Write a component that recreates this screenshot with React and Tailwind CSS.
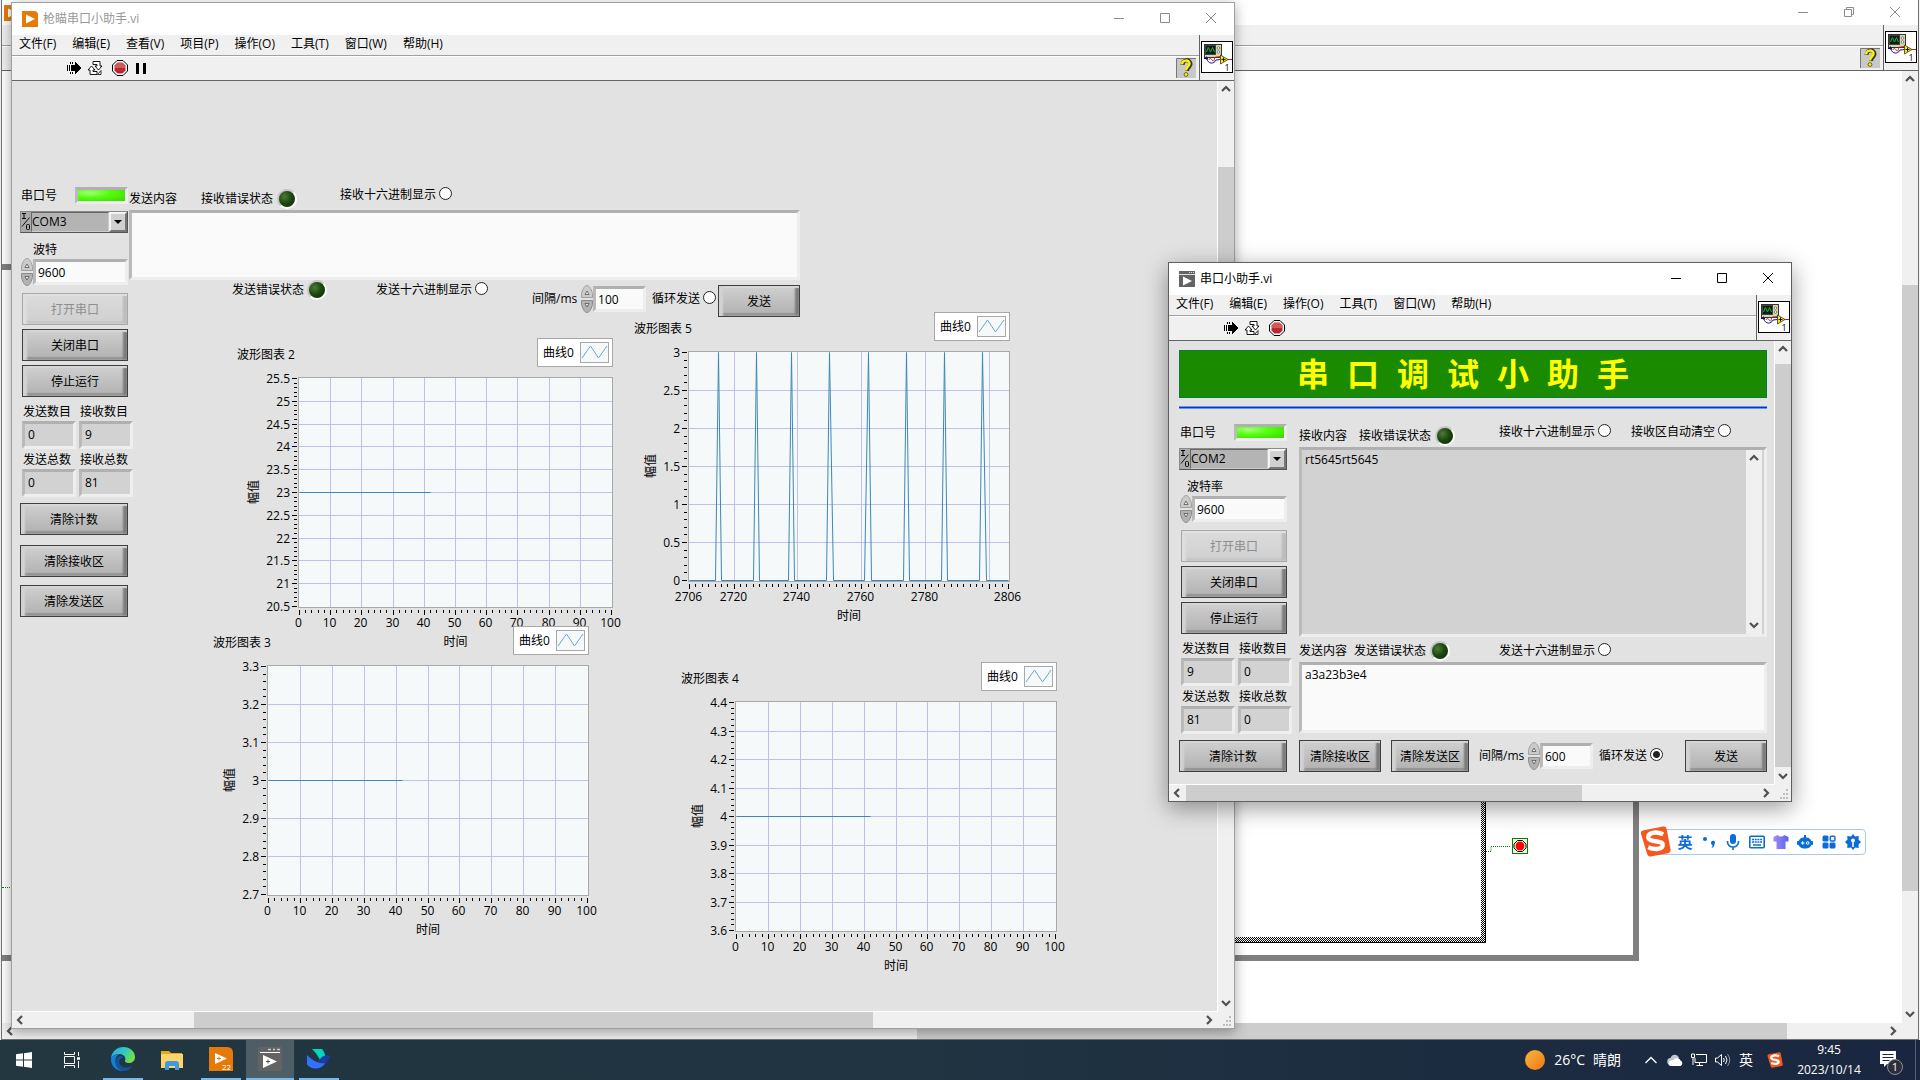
import { useState } from "react";

const mainMenu = ["文件(F)", "编辑(E)", "查看(V)", "项目(P)", "操作(O)", "工具(T)", "窗口(W)", "帮助(H)"];
const subMenu = ["文件(F)", "编辑(E)", "操作(O)", "工具(T)", "窗口(W)", "帮助(H)"];

const range = (from, to, step) => {
  const out = [];
  const n = Math.round((to - from) / step);
  for (let i = 0; i <= n; i++) out.push(Math.round((from + i * step) * 100) / 100);
  return out;
};

const tens = range(0, 100, 10);
const spikes = [2715, 2727, 2738, 2750, 2762, 2774, 2786, 2798];
const spikeData = [
  [2706, 0],
  ...spikes.flatMap((s) => [[s - 1, 0], [s, 3], [s + 1, 0]]),
  [2806, 0],
];

const charts = {
  c2: { title: "波形图表 2", left: 61, x: [0, 100], xTicks: tens, y: [20.5, 25.5], yStep: 0.5, data: [[0, 23], [42, 23]] },
  c3: { title: "波形图表 3", left: 54, x: [0, 100], xTicks: tens, y: [2.7, 3.3], yStep: 0.1, data: [[0, 3], [42, 3]] },
  c4: { title: "波形图表 4", left: 54, x: [0, 100], xTicks: tens, y: [3.6, 4.4], yStep: 0.1, data: [[0, 4], [42, 4]] },
  c5: {
    title: "波形图表 5",
    left: 54,
    x: [2706, 2806],
    xTicks: [2706, 2720, 2740, 2760, 2780, 2800, 2806],
    hidden: [2800],
    y: [0, 3],
    yStep: 0.5,
    data: spikeData,
  },
};

/* ---------- icons ---------- */

const ViIcon = () => (
  <svg viewBox="0 0 32 32" className="h-8 w-8">
    <rect x="0.5" y="0.5" width="31" height="31" fill="#fff" stroke="#000" />
    <rect x="3.5" y="3.5" width="17" height="13" fill="#d9d6b4" stroke="#333" />
    <rect x="4.500" y="4.500" width="10" height="9" fill="#101c14" stroke="#444" />
    <path d="M5.500 11l1.800-4.500L9.500 11l2-4.500L13.500 11" fill="none" stroke="#12b83c" />
    <circle cx="17.500" cy="7" r="1.300" fill="#fff" stroke="#555" strokeWidth=".7" />
    <circle cx="17.500" cy="11" r="1.300" fill="#fff" stroke="#555" strokeWidth=".7" />
    <path d="M5.500 15.500v3M3 17.500h4" stroke="#001080" />
    <path d="M6 18c1 5 7 5.500 9 1l4.500-.5" fill="none" stroke="#0a1a90" />
    <path d="M8 19c1-3 2.500-1 3.500.5s2-.5 2-2 1.500-1.500 5.500-2" fill="none" stroke="#e01010" />
    <path d="M26 18.500h5" stroke="#e01010" />
    <path d="M19.500 14v9l7.500-4.500z" fill="#ffea00" stroke="#333" strokeWidth=".8" />
    <path d="M20.500 18.500h4M22.500 16.500v4" stroke="#000" strokeWidth=".9" />
    <text x="23.500" y="30" fontSize="9" fill="#000">1</text>
  </svg>
);

const RunIcon = () => (
  <svg viewBox="0 0 16 14" className="h-[14px] w-4" shapeRendering="crispEdges">
    <path d="M1.500 4v6M3.500 4v6M4.500 1v2M4.500 11v2M6.500 1v2M6.500 11v2" stroke="#000" />
    <path d="M5 4h4V1l6 6-6 6v-3H5z" fill="#000" />
  </svg>
);

const LoopIcon = () => (
  <svg viewBox="0 0 16 14" className="h-[14px] w-4">
    <path d="M6 .5h7v4.500h2L11.500 9 8 5h2V3.500H6z" fill="#fff" stroke="#000" strokeWidth=".9" />
    <path d="M10 13.500H3V9H1l3.500-4L8 9H6v1.500h4z" fill="#fff" stroke="#000" strokeWidth=".9" />
    <path d="M10.500 13.500L14 9.500v4z" fill="#fff" stroke="#000" strokeWidth=".8" />
  </svg>
);

const StopIcon = () => (
  <svg viewBox="0 0 16 16" className="h-4 w-4">
    <path d="M5 .5h6L15.500 5v6L11 15.500H5L.5 11V5z" fill="#fff" stroke="#000" />
    <path d="M5.500 2.500h5l3 3v5l-3 3h-5l-3-3v-5z" fill="#b8282c" />
    <path d="M5.500 3h5l2.500 2.500V8H3V5.500z" fill="#cf5a5c" />
  </svg>
);

const HelpIcon = () => (
  <svg viewBox="0 0 20 20" className="h-5 w-5">
    <path d="M0 0h20v20H0z" fill="#c8c8c8" />
    <path d="M.5 20V.5H20" fill="none" stroke="#777" />
    <path d="M6.500 7c0-6 8-6 8-1 0 3-3.500 3.500-3.500 7" fill="none" stroke="#333" strokeWidth="4" />
    <path d="M6 6.500c0-5 7.500-5 7.500-1C13.500 8.500 10 9 10 12.500" fill="none" stroke="#ffef00" strokeWidth="2.500" />
    <circle cx="10" cy="16.500" r="1.900" fill="#ffef00" stroke="#333" strokeWidth=".7" />
  </svg>
);

const AppIcon = ({ gray }) => (
  <svg viewBox="0 0 16 16" className="h-4 w-4">
    <path d={gray ? "M0 0h16v16H0z" : "M0 0h12q4 0 4 4v12H0z"} fill={gray ? "#636363" : "#e67a08"} />
    {gray && <path d="M0 3.500h16M10 1.500h1M12 1.500h1M14 1.500h1" stroke="#ddd" />}
    <path d={gray ? "M4 5.500v9L13 10z" : "M4 3.500v9L13 8z"} fill="#fff" />
  </svg>
);

const SogouLogo = ({ className }) => (
  <svg viewBox="0 0 32 32" className={className}>
    <path d="M4 4.500L24 .5q3-.5 3.500 2.500l4 21q.5 3-2.500 4l-18 3.500q-3 .5-3.600-2.500L1 8q-.5-3 3-3.500z" fill="#f4581e" />
    <path d="M24 8.500C16 5 8 7 8.500 12c.5 5 15 2.500 15 7.500 0 4.500-8 5.500-15 2.500" fill="none" stroke="#fff" strokeWidth="4.500" />
  </svg>
);

const Arrow = ({ dir }) => {
  const d = {
    up: "M4 10l4-4 4 4",
    down: "M4 5l4 4 4-4",
    left: "M10 4L6 8l4 4",
    right: "M5 4l4 4-4 4",
  }[dir];
  return (
    <svg viewBox="0 0 16 16" className="h-4 w-4 shrink-0">
      <path d={d} fill="none" stroke="#505050" strokeWidth="2.200" />
    </svg>
  );
};

/* ---------- window parts ---------- */

const VScroll = ({ gap, thumb }) => (
  <div className="flex w-4 shrink-0 flex-col items-center bg-[#f0f0f0]">
    <Arrow dir="up" />
    <div className={`${gap} shrink-0`} />
    <div className={`w-full shrink-0 bg-[#cdcdcd] ${thumb}`} />
    <div className="min-h-0 flex-1" />
    <Arrow dir="down" />
  </div>
);

const HScroll = ({ gap, thumb, grip = true }) => (
  <div className="flex h-4 shrink-0 items-center bg-[#f0f0f0]">
    <Arrow dir="left" />
    <div className={`${gap} shrink-0`} />
    <div className={`h-full shrink-0 bg-[#cdcdcd] ${thumb}`} />
    <div className="min-w-0 flex-1" />
    <Arrow dir="right" />
    <svg viewBox="0 0 16 16" className="h-4 w-4 shrink-0">
      {grip && <path d="M11 5h2M8 9h2M11 9h2M5 13h2M8 13h2M11 13h2" stroke="#bdbdbd" strokeWidth="2" />}
    </svg>
  </div>
);

const CaptionButtons = ({ active, restore }) => {
  const color = active ? "#000" : "#8c8c8c";
  const shapes = [
    ["最小化", "M0 5.500h10"],
    ["最大化", restore ? "M.5 2.500h7v7h-7zM2.500 2V.5h7v7H8" : "M.5.5h9v9h-9z"],
    ["关闭", "M0 0l10 10M10 0L0 10"],
  ];
  return (
    <div className="flex pb-[2px]">
      {shapes.map(([name, d]) => (
        <button key={name} aria-label={name} className="flex w-[46px] items-center justify-center">
          <svg viewBox="0 0 10 10" className="h-[10px] w-[10px] overflow-visible">
            <path d={d} fill="none" stroke={color} />
          </svg>
        </button>
      ))}
    </div>
  );
};

const HeaderBars = ({ menu = [], pause, help }) => (
  <div className="flex h-[46px] shrink-0 border-b border-[#646464] bg-[#f0f0f0]">
    <div className="flex min-w-0 flex-1 flex-col">
      <nav className="flex h-5 items-start gap-4 pl-[7px]">
        {menu.map((m) => (
          <button key={m} className="whitespace-nowrap leading-[18px]">{m}</button>
        ))}
      </nav>
      <div className="flex h-[25px] items-center justify-between border-t border-[#a0a0a0] pl-[54px] shadow-[inset_0_1px_0_#fff]">
        <div className="flex items-center">
          {menu.length > 0 && (
            <>
              <button aria-label="运行" className="mr-[5px]"><RunIcon /></button>
              <button aria-label="连续运行" className="mr-[9px]"><LoopIcon /></button>
              <button aria-label="中止"><StopIcon /></button>
            </>
          )}
          {pause && (
            <button aria-label="暂停" className="ml-2 flex h-[11px] gap-1">
              <span className="w-[3px] bg-black" />
              <span className="w-[3px] bg-black" />
            </button>
          )}
        </div>
        {help && <button aria-label="帮助" className="mr-[3px]"><HelpIcon /></button>}
      </div>
    </div>
    <div className="flex w-[35px] items-center justify-center border-l border-[#646464] pb-px">
      <ViIcon />
    </div>
  </div>
);

/* ---------- front panel controls ---------- */

const PanelButton = ({ children, className = "w-full", disabled }) => (
  <button
    disabled={disabled}
    className={`h-8 shrink-0 whitespace-nowrap border border-[#3f3f3f] bg-gradient-to-b from-[#d0d0d0] to-[#b0b0b0] pt-px shadow-[inset_4px_0_2px_#d2d2d2,inset_0_2px_1px_#d8d8d8,inset_-4px_0_2px_#7c7c7c,inset_0_-3px_1px_#949494] disabled:border-[#a8a8a8] disabled:from-[#dcdcdc] disabled:to-[#cfcfcf] disabled:text-[#8e8e8e] disabled:shadow-[inset_4px_0_2px_#dedede,inset_0_2px_1px_#e2e2e2,inset_-4px_0_2px_#bcbcbc,inset_0_-3px_1px_#c6c6c6] ${className}`}>
    {children}
  </button>
);

const sunken = "border-[3px] border-t-[#b0b0b0] border-l-[#bababa] border-r-[#eeeeee] border-b-[#eeeeee]";

const Led = () => (
  <span className="h-5 w-5 shrink-0 rounded-full border-2 border-[#c4c4c4] border-r-white border-b-white bg-[radial-gradient(circle_at_35%_35%,#4f7a3c,#1c4a0e_45%,#0b2405)]" />
);

const Lamp = () => (
  <span className={`h-[17px] w-[53px] shrink-0 ${sunken} bg-[radial-gradient(ellipse_at_25%_25%,#a5ff7d,#55ff10_40%,#3fd400)]`} />
);

const Radio = ({ label, checked = false, className = "" }) => {
  const [on, setOn] = useState(checked);
  return (
    <label className={`flex shrink-0 items-start gap-[3px] whitespace-nowrap ${className}`}>
      {label}
      <input
        type="radio"
        checked={on}
        onClick={() => setOn(!on)}
        onChange={() => {}}
        className="h-[13px] w-[13px] appearance-none rounded-full border border-[#222] bg-white checked:bg-[radial-gradient(circle,#222_3px,#fff_4px)]"
      />
    </label>
  );
};

const NumberField = ({ id, value, className }) => (
  <div className={`flex h-7 shrink-0 items-center ${className}`}>
    <svg viewBox="0 0 12 28" className="h-7 w-3 shrink-0">
      <path d="M.5 12.500V8.500C2 3 4 .5 6 .5S10 3 11.500 8.500v4z" fill="#cacaca" stroke="#a0a0a0" />
      <path d="M.5 15.500v4c1.500 5.500 3.500 8 5.500 8s4-2.500 5.500-8v-4z" fill="#b2b2b2" stroke="#8c8c8c" />
      <path d="M4 9.500L6 6l2 3.500zM4 18.500L6 22l2-3.500z" fill="#eee" stroke="#555" strokeWidth=".8" />
    </svg>
    <input id={id} defaultValue={value} className={`h-[26px] min-w-0 flex-1 bg-[#fafafa] pl-[2px] outline-none ${sunken}`} />
  </div>
);

const Counter = ({ id, label, value }) => (
  <div className="flex w-[54px] flex-col">
    <label htmlFor={id} className="h-5 whitespace-nowrap pl-px leading-[22px]">{label}</label>
    <output id={id} className={`h-7 bg-[#d2d2d2] pl-[3px] leading-[22px] ${sunken}`}>{value}</output>
  </div>
);

// Port settings and counters, the same in both front panels
const PortColumn = ({ name, port, ports, baudLabel, baudPad, counts }) => (
  <div className="flex flex-col">
    <div className="flex h-[17px] items-center justify-between pl-px">
      <span>串口号</span>
      <Lamp />
    </div>
    <div className="mt-[7px] flex h-[22px] border border-[#8a8a8a] border-r-[#555] border-b-[#555] bg-[#ababab]">
      <svg viewBox="0 0 10 20" className="h-5 w-[10px] shrink-0">
        <path d="M1 1.500h4M3 1.500v5M1 6.500h4" fill="none" stroke="#000" />
        <path d="M1 14.500l7.500-9" fill="none" stroke="#000" strokeWidth=".9" />
        <rect x="5.500" y="12.500" width="3" height="5" rx="1" fill="none" stroke="#000" />
      </svg>
      <select
        aria-label="串口号"
        defaultValue={port}
        className="min-w-0 flex-1 appearance-none border border-[#666] border-r-[#ccc] border-b-[#ccc] bg-[#b4b4b4] outline-none">
        {ports.map((p) => (
          <option key={p}>{p}</option>
        ))}
      </select>
      <span className="flex w-[18px] items-center justify-center border-2 border-[#f4f4f4] border-r-[#777] border-b-[#777] bg-[#d0d0d0]">
        <svg viewBox="0 0 8 4" className="h-1 w-2"><path d="M0 0h8L4 4z" /></svg>
      </span>
    </div>
    <label htmlFor={`${name}-baud`} className={`mt-2 h-[17px] leading-[18px] ${baudPad}`}>{baudLabel}</label>
    <NumberField id={`${name}-baud`} value="9600" className="ml-px" />
    <div className="mt-[7px] flex flex-col gap-1 pl-[2px]">
      <PanelButton disabled>打开串口</PanelButton>
      <PanelButton>关闭串口</PanelButton>
      <PanelButton>停止运行</PanelButton>
    </div>
    <div className="mt-1 flex w-[114px] flex-wrap gap-x-[3px] pl-[2px]">
      {counts.map(([label, value]) => (
        <Counter key={label} id={`${name}-${label}`} label={label} value={value} />
      ))}
    </div>
    <PanelButton className="mt-[6px] w-full">清除计数</PanelButton>
  </div>
);

const Chart = ({ title, left, x, xTicks, hidden = [], y, yStep, data, className = "" }) => {
  const sx = (v) => Math.round(left + 1 + ((v - x[0]) / (x[1] - x[0])) * (374 - left - 1)) + 0.5;
  const sy = (v) => Math.round(229 - ((v - y[0]) / (y[1] - y[0])) * 228) + 0.5;
  const yTicks = range(y[0], y[1], yStep);
  const yMinor = range(y[0], y[1], yStep / 5);
  return (
    <section className={`w-[376px] shrink-0 ${className}`}>
      <div className="flex h-[29px] items-center justify-between">
        <h2 className="pt-[5px]">{title}</h2>
        <div className="flex h-full w-[76px] items-center justify-between border border-[#a8a8a8] bg-white pl-[5px] pr-[3px]">
          <span>曲线0</span>
          <svg viewBox="0 0 29 21" className="h-[21px] w-[29px]">
            <rect x=".5" y=".5" width="28" height="20" fill="#f5f9fa" stroke="#a8a8a8" />
            <path d="M2 16L10.500 4l8 12L27 4" fill="none" stroke="#6fa3cf" />
          </svg>
        </div>
      </div>
      <svg viewBox="0 0 376 273" className="mt-[10px] block h-[273px] w-[376px] overflow-visible" fontSize="12">
        <rect x={left + 0.5} y="0.5" width={375 - left} height="230" fill="#f5f9fa" stroke="#a8a8a8" />
        {xTicks.slice(1, -1).map((v) => (
          <path key={v} d={`M${sx(v)} 1v229`} stroke="#c0c0ea" />
        ))}
        {yTicks.slice(1, -1).map((v) => (
          <path key={v} d={`M${left + 1} ${sy(v)}H375`} stroke="#c0c0ea" />
        ))}
        {range(x[0], x[1], 2).map((v) => (
          <path key={v} d={`M${sx(v)} 233v3`} stroke="#000" />
        ))}
        {yMinor.map((v) => (
          <path key={v} d={`M${left - 4} ${sy(v)}h3`} stroke="#000" />
        ))}
        {xTicks.map((v) => (
          <g key={v}>
            <path d={`M${sx(v)} 233v5`} stroke="#000" />
            {!hidden.includes(v) && <text x={sx(v) - 1} y="250" textAnchor="middle">{v}</text>}
          </g>
        ))}
        {yTicks.map((v) => (
          <g key={v}>
            <path d={`M${left - 6} ${sy(v)}h5`} stroke="#000" />
            <text x={left - 8} y={sy(v) + 4} textAnchor="end">{v}</text>
          </g>
        ))}
        <polyline
          points={data.map(([a, b]) => `${sx(a)},${sy(b)}`).join(" ")}
          fill="none"
          stroke="#3f86b8"
        />
        <text x={(left + 376) / 2} y="269" textAnchor="middle">时间</text>
        <text transform="translate(21 115) rotate(-90)" textAnchor="middle">幅值</text>
      </svg>
    </section>
  );
};

/* ---------- windows ---------- */

const DiagramWindow = () => (
  <div className="absolute inset-y-0 left-px right-px flex flex-col border-x border-b border-[#707070] bg-white">
    <div className="flex h-[25px] shrink-0 items-center justify-between pl-[2px]">
      <AppIcon />
      <CaptionButtons restore />
    </div>
    <HeaderBars help />
    <div className="flex min-h-0 flex-1">
      <div className="relative min-w-0 flex-1 overflow-hidden">
        <div className="absolute left-[-20px] top-[193px] h-[697px] w-[1657px] border-[6px] border-[#808080]" />
        <svg viewBox="0 0 560 300" className="absolute left-[1000px] top-[600px] h-[300px] w-[560px]">
          <defs>
            <pattern id="check" width="2" height="2" patternUnits="userSpaceOnUse">
              <path d="M0 0h1v1H0zM1 1h1v1H1z" fill="#000" shapeRendering="crispEdges" />
            </pattern>
          </defs>
          <path d="M0 266h479V0h4v271H0z" fill="url(#check)" />
          <path d="M0 271.500h483.500V0" fill="none" stroke="#000" />
          <path d="M484 180.500h5v-5h20" fill="none" stroke="#008000" strokeDasharray="1 1" />
          <rect x="510.500" y="167.500" width="15" height="15" fill="#ffffd0" stroke="#008000" />
          <path d="M515.500 169.500h5l3.500 3.500v4l-3.500 3.500h-5L512 177v-4z" fill="#fff" stroke="#000" />
          <circle cx="518" cy="175" r="4.500" fill="#f00" />
        </svg>
        <div className="absolute left-0 top-[816px] w-3 border-t border-dotted border-[#008000]" />
      </div>
      <VScroll gap="h-[198px]" thumb="h-[606px]" />
    </div>
    <HScroll gap="w-[899px]" thumb="w-[870px]" grip={false} />
  </div>
);

const MainWindow = () => (
  <div className="absolute left-[11px] top-[2px] flex h-[1027px] w-[1224px] flex-col border border-[#a0a0a0] bg-white shadow-[0_3px_12px_rgba(0,0,0,0.35)]">
    <div className="flex h-8 shrink-0 items-stretch justify-between pl-[10px] text-[#999]">
      <div className="flex items-center gap-[5px]">
        <AppIcon />
        枪瞄串口小助手.vi
      </div>
      <CaptionButtons />
    </div>
    <HeaderBars menu={mainMenu} pause help />
    <div className="flex min-h-0 flex-1">
      <div className="flex min-w-0 flex-1 overflow-hidden border-b border-r border-white bg-[#e2e2e2] pl-2 pt-[106px]">
        <div className="mr-px flex w-[108px] shrink-0 flex-col">
          <PortColumn
            name="main"
            port="COM3"
            ports={["COM2", "COM3"]}
            baudLabel="波特"
            baudPad="pl-[13px]"
            counts={[["发送数目", 0], ["接收数目", 9], ["发送总数", 0], ["接收总数", 81]]}
          />
          <PanelButton className="mt-[10px] w-full">清除接收区</PanelButton>
          <PanelButton className="mt-2 w-full">清除发送区</PanelButton>
        </div>
        <div className="min-w-0 flex-1">
          <div className="flex h-[23px] items-center whitespace-nowrap">
            <label htmlFor="main-send">发送内容</label>
            <span className="ml-6 mr-1">接收错误状态</span>
            <Led />
            <Radio label="接收十六进制显示" className="ml-[43px] self-start" />
          </div>
          <textarea id="main-send" className={`block h-[70px] w-[671px] resize-none bg-[#fafafa] outline-none ${sunken}`} />
          <div className="flex h-8 items-start whitespace-nowrap pl-[103px]">
            <div className="flex h-5 items-center">
              <span className="mr-[3px]">发送错误状态</span>
              <Led />
              <Radio label="发送十六进制显示" className="ml-[49px]" />
            </div>
            <div className="ml-11 mt-[5px] flex h-7 items-center">
              <label htmlFor="main-gap" className="w-[49px]">间隔/ms</label>
              <NumberField id="main-gap" value="100" className="mr-[6px] w-[65px]" />
              <Radio label="循环发送" />
            </div>
            <PanelButton className="ml-[2px] mt-[5px] w-[82px]">发送</PanelButton>
          </div>
          <div className="flex pl-[84px]">
            <div className="w-[421px] pt-[26px]">
              <Chart {...charts.c2} className="ml-6" />
              <Chart {...charts.c3} className="relative -mt-6" />
            </div>
            <div>
              <Chart {...charts.c5} />
              <Chart {...charts.c4} className="ml-[47px] mt-[38px]" />
            </div>
          </div>
        </div>
      </div>
      <VScroll gap="h-[70px]" thumb="h-[333px]" />
    </div>
    <HScroll gap="w-[166px]" thumb="w-[679px]" />
  </div>
);

const SmallWindow = () => (
  <div className="absolute left-[1168px] top-[262px] flex h-[540px] w-[624px] flex-col border border-[#5f5f5f] bg-white shadow-[0_6px_22px_rgba(0,0,0,0.4)]">
    <div className="flex h-8 shrink-0 items-stretch justify-between pl-[10px]">
      <div className="flex items-center gap-[5px]">
        <AppIcon gray />
        串口小助手.vi
      </div>
      <CaptionButtons active />
    </div>
    <HeaderBars menu={subMenu} />
    <div className="flex min-h-0 flex-1">
      <div className="min-w-0 flex-1 overflow-hidden border-b border-r border-white bg-[#e2e2e2] pl-[10px] pr-[7px] pt-[9px]">
        <h1 className="flex h-12 items-center justify-center gap-[18px] border border-[#0b7a3c] bg-[#1a8a00] pr-5 text-[32px] font-bold leading-none text-[#ffff00]">
          {[..."串口调试小助手"].map((c) => (
            <span key={c}>{c}</span>
          ))}
        </h1>
        <div className="mt-2 h-[3px] border-y border-[#6a93ee] bg-[#0038d8]" />
        <div className="mt-[15px] flex gap-3">
          <div className="w-[108px] shrink-0">
            <PortColumn
              name="sub"
              port="COM2"
              ports={["COM2", "COM3"]}
              baudLabel="波特率"
              baudPad="pl-2"
              counts={[["发送数目", 9], ["接收数目", 0], ["发送总数", 81], ["接收总数", 0]]}
            />
          </div>
          <div className="flex min-w-0 flex-1 flex-col whitespace-nowrap">
            <div className="flex h-[23px] items-center">
              <label htmlFor="sub-recv">接收内容</label>
              <span className="ml-3 mr-1">接收错误状态</span>
              <Led />
              <Radio label="接收十六进制显示" className="ml-11 mr-5 self-start" />
              <Radio label="接收区自动清空" className="self-start" />
            </div>
            <div className={`flex h-[190px] bg-[#d2d2d2] pr-[2px] ${sunken}`}>
              <textarea id="sub-recv" readOnly defaultValue="rt5645rt5645" className="min-w-0 flex-1 resize-none bg-transparent pl-[3px] leading-5 outline-none" />
              <VScroll gap="h-0" thumb="h-0" />
            </div>
            <div className="flex h-[25px] items-center pt-[3px]">
              <label htmlFor="sub-send">发送内容</label>
              <span className="ml-[7px] mr-1">发送错误状态</span>
              <Led />
              <Radio label="发送十六进制显示" className="ml-[49px]" />
            </div>
            <textarea id="sub-send" defaultValue="a3a23b3e4" className={`block h-[71px] resize-none bg-[#fafafa] pl-[3px] leading-5 outline-none ${sunken}`} />
            <div className="mt-[7px] flex h-8 items-center">
              <PanelButton className="mr-[10px] w-[82px]">清除接收区</PanelButton>
              <PanelButton className="mr-[10px] w-[78px]">清除发送区</PanelButton>
              <label htmlFor="sub-gap" className="w-[49px]">间隔/ms</label>
              <NumberField id="sub-gap" value="600" className="mr-[6px] w-[65px]" />
              <Radio label="循环发送" checked />
              <PanelButton className="ml-auto w-[82px]">发送</PanelButton>
            </div>
          </div>
        </div>
      </div>
      <VScroll gap="h-[7px]" thumb="h-[403px]" />
    </div>
    <HScroll gap="w-px" thumb="w-[396px]" />
  </div>
);

const ImeBar = () => (
  <div className="absolute left-[1640px] top-[826px] flex h-[31px] items-center text-[#0a6cd6]">
    <SogouLogo className="relative z-10 h-[31px] w-[31px]" />
    <div className="-ml-4 flex h-[26px] items-center gap-2 rounded-sm border border-[#a9c8ea] bg-white pl-[21px] pr-1">
      <button className="w-4 text-[15px] font-bold leading-4">英</button>
      <svg viewBox="0 0 16 16" className="h-4 w-4" fill="currentColor">
        <circle cx="4" cy="5" r="2" />
        <path d="M10 8.500a2 2 0 1 1 3.500 1.500c0 2-1 3.500-3 4 .8-1 1-2 1-3-.9-.2-1.500-1-1.500-2.500z" />
      </svg>
      <svg viewBox="0 0 16 16" className="h-4 w-4" fill="currentColor">
        <rect x="5" y="0" width="6" height="10" rx="3" />
        <path d="M2.500 7v1a5.500 5 0 0 0 11 0V7M8 13v3" fill="none" stroke="currentColor" strokeWidth="1.600" />
      </svg>
      <svg viewBox="0 0 16 16" className="h-4 w-4">
        <rect x=".8" y="2.300" width="14.400" height="11.400" rx="1" fill="none" stroke="currentColor" strokeWidth="1.600" />
        <path d="M3 5.500h10M3 8h10" stroke="currentColor" strokeWidth="1.600" strokeDasharray="2 .7" />
        <path d="M4 11h8" stroke="currentColor" strokeWidth="1.500" />
      </svg>
      <svg viewBox="0 0 16 16" className="h-4 w-4">
        <defs>
          <linearGradient id="shirt" x1="0" x2="1">
            <stop offset="0" stopColor="#a08af5" />
            <stop offset="1" stopColor="#5a63f0" />
          </linearGradient>
        </defs>
        <path d="M5 1c1 2 5 2 6 0l4.500 2v4.500H12.500V15h-9V7.500H.5V3z" fill="url(#shirt)" />
      </svg>
      <svg viewBox="0 0 16 16" className="h-4 w-4">
        <path d="M8 1v3" stroke="currentColor" strokeWidth="2" />
        <rect x="1.500" y="3.500" width="13" height="11" rx="5" fill="currentColor" />
        <rect x="0" y="7" width="16" height="4" rx="1" fill="currentColor" />
        <path d="M4 9h3.500M5.700 7.300v3.500" stroke="#fff" />
        <circle cx="10.700" cy="9" r="1.300" fill="none" stroke="#fff" />
      </svg>
      <svg viewBox="0 0 16 16" className="h-4 w-4" fill="currentColor">
        <rect x="1.500" y="1.500" width="6" height="6" rx="1.500" />
        <rect x="9.300" y="2.300" width="4.600" height="4.600" rx="1" fill="none" stroke="currentColor" strokeWidth="1.500" />
        <rect x="1.500" y="8.500" width="6" height="6" rx="1.500" />
        <rect x="8.500" y="8.500" width="6" height="6" rx="1.500" />
      </svg>
      <svg viewBox="0 0 16 16" className="h-4 w-4">
        <path d="M8 0l2 2.500 3.800-.5-.3 3.500L16 8l-2.500 2.500.3 3.500-3.800-.5L8 16l-2-2.500-3.800.5.300-3.500L0 8l2.500-2.500L2.200 2l3.800.5z" fill="currentColor" />
        <path d="M8 5v8" stroke="#fff" strokeWidth="1.500" />
        <circle cx="8" cy="6.500" r="2" fill="#fff" />
      </svg>
    </div>
  </div>
);

const TaskButton = ({ name, open, active, children, className = "w-12" }) => (
  <button
    aria-label={name}
    className={`flex h-10 flex-col items-center ${active ? "bg-white/20" : ""} ${className}`}>
    <span className="flex flex-1 items-center">{children}</span>
    {open && <span className={`h-[2px] bg-[#76b9ed] ${active ? "w-full" : "w-10"}`} />}
  </button>
);

const Taskbar = () => (
  <footer className="flex h-10 shrink-0 items-center justify-between bg-gradient-to-r from-[#223740] via-[#1f3341] to-[#1a2640] text-white">
    <div className="flex">
      <TaskButton name="开始">
        <svg viewBox="0 0 16 16" className="h-4 w-4" fill="#fff">
          <path d="M0 2.300l7-1v6.200H0zM8 1.200L16 0v7.500H8zM0 8.500h7v6.200l-7-1zM8 8.500h8V16l-8-1.200z" />
        </svg>
      </TaskButton>
      <TaskButton name="任务视图">
        <svg viewBox="0 0 16 16" className="h-4 w-4" fill="none" stroke="#fff">
          <path d="M.5 0v2.500h10V0M.5 16v-2.500h10V16M.5 4.500h10v7H.5zM14.500 0v4M14.500 9v7" />
          <path d="M13 6.500h3" strokeWidth="2.500" />
        </svg>
      </TaskButton>
      <TaskButton name="Edge" open className="ml-[2px] w-[50px]">
        <svg viewBox="0 0 24 24" className="h-6 w-6">
          <defs>
            <linearGradient id="edgeTop" x1="0" y1="0" x2="1" y2=".4">
              <stop offset="0" stopColor="#2aa8e8" />
              <stop offset=".6" stopColor="#35c8c0" />
              <stop offset="1" stopColor="#6fe04a" />
            </linearGradient>
          </defs>
          <path d="M0 11.500C.5 4.500 6 0 12.500 0 19 0 24 4.500 24 10c0 4-3 6-6.500 6-2.500 0-4-1-3.500-2.200C15.500 11 13 7 8.500 7 4 7 1 9 0 11.500z" fill="url(#edgeTop)" />
          <path d="M0 11.500C1 8.500 4.500 6.500 8.500 7c-3 1.500-4.500 4.500-4 8C5 20 9 23.500 13 24 5.500 24.500-.5 19 0 11.500z" fill="#1180d8" />
          <path d="M8.500 13c-1 5 3 8 8 7.500 2 0 4-.8 5-1.500-2 3-5.500 5-9 5-4.500-.5-8-4-8-8.500 0-3.500 2-6 4.500-6.800 2 0 3 1.300 3 2.500-1.500-.5-3 .3-3.500 1.800z" fill="#14539c" />
        </svg>
      </TaskButton>
      <TaskButton name="文件资源管理器" className="w-[47px]">
        <svg viewBox="0 0 22 20" className="h-5 w-[22px]">
          <path d="M0 1h8l2 2h11v15H0z" fill="#e8a917" />
          <path d="M0 4h22v14H0z" fill="#fbd56a" />
          <path d="M4 20v-6q0-3 3-3h8q3 0 3 3v6h-4v-4H8v4z" fill="#3f9ae0" />
        </svg>
      </TaskButton>
      <TaskButton name="LabVIEW" open className="w-[51px]">
        <svg viewBox="0 0 24 24" className="h-6 w-6">
          <path d="M0 0h18q6 0 6 6v18H0z" fill="#e67a08" />
          <path d="M6 6v11l12-5.500z" fill="#fff" />
          <path d="M8 11.500h4M10 9.500v4" stroke="#e67a08" />
          <text x="13" y="23" fontSize="8" fill="#fff">22</text>
        </svg>
      </TaskButton>
      <TaskButton name="VI" open active>
        <svg viewBox="0 0 24 24" className="h-6 w-6">
          <path d="M0 0h24v24H0z" fill="#636363" />
          <path d="M2 5.500h20" stroke="#fff" />
          <path d="M10 2.500h3M15 2.500h2M19 2.500h3" stroke="#ccc" strokeWidth="1.500" />
          <path d="M5 8v13l14-6.500z" fill="#fff" />
          <path d="M8 14.500h4M10 12.500v4" stroke="#555" />
        </svg>
      </TaskButton>
      <TaskButton name="飞书" open className="w-[50px]">
        <svg viewBox="0 0 24 20" className="h-5 w-6">
          <path d="M5 0h10c2 2.500 3 5 3.500 7.500L13 11C11 7 8.500 3 5 0z" fill="#00d6b9" />
          <path d="M11 13c3-5 7-8 13-6-2.500 2-3 6-6 8.500-2 1-5-.5-7-2.500z" fill="#1a3c9e" />
          <path d="M0 6c5 5 11 8.500 18 8.500C15 19 10 20.500 5 19c-3-1-5-3-5-4z" fill="#3370ff" />
        </svg>
      </TaskButton>
    </div>
    <div className="flex h-full items-center text-[14px]">
      <span className="mr-[9px] h-5 w-5 rounded-full bg-gradient-to-br from-[#f5b83d] to-[#f07414]" />
      <span className="mr-2">26°C</span>
      <span className="mr-6">晴朗</span>
      <svg viewBox="0 0 12 8" className="mr-[10px] h-2 w-3"><path d="M.5 7L6 1.500 11.500 7" fill="none" stroke="#fff" strokeWidth="1.300" /></svg>
      <svg viewBox="0 0 16 12" className="mr-2 h-3 w-4">
        <path d="M4 11a3.500 3.500 0 0 1-.5-7A4.500 4.500 0 0 1 12 3.500" fill="#bfc6cc" />
        <path d="M3 12a3 3 0 0 1 1-5.500C6 6 7 5.500 8 4.500a4 4 0 0 1 5.500 2A3 3 0 0 1 13.500 12z" fill="#fff" />
      </svg>
      <svg viewBox="0 0 16 14" className="mr-2 h-[14px] w-4" fill="none" stroke="#fff">
        <path d="M5 1.500h10.500v8H4V5M8.500 9.500v3M5.500 12.500H12M.5 1h3v3.500h-3zM2 4.500V12" />
      </svg>
      <svg viewBox="0 0 16 14" className="mr-2 h-[14px] w-4" fill="none" stroke="#fff">
        <path d="M.5 5h2l4-3.500v11L2.500 9h-2zM8.500 5q1.500 2 0 4M10.500 3q3 4 0 8" />
        <path d="M12.500 1q4.500 6 0 12" stroke="#8892a0" />
      </svg>
      <span className="mr-[14px]">英</span>
      <SogouLogo className="mr-3 h-4 w-4" />
      <div className="mr-4 flex w-[68px] flex-col items-center text-[12px] leading-5">
        <span>9:45</span>
        <span>2023/10/14</span>
      </div>
      <button aria-label="通知" className="relative mr-3 h-10 w-6">
        <svg viewBox="0 0 24 40" className="h-10 w-6">
          <path d="M1 11h16v13H8l-3 3v-3H1z" fill="#fff" />
          <path d="M3.500 14.500h11M3.500 17.500h11M3.500 20.500h7" stroke="#1a2640" />
          <circle cx="16" cy="27" r="7.500" fill="#2b3038" stroke="#8a8f98" />
          <text x="16" y="31" fontSize="11" fill="#fff" textAnchor="middle">1</text>
        </svg>
      </button>
      <span className="h-full w-[5px] border-l border-[#56607a]" />
    </div>
  </footer>
);

export default function App() {
  return (
    <div className="flex h-screen flex-col overflow-hidden bg-[#f3f3f3] font-['Open_Sans','Noto_Sans_CJK_SC',sans-serif] text-[12px] leading-4 text-black">
      <main className="relative min-h-0 flex-1 overflow-hidden">
        <DiagramWindow />
        <MainWindow />
        <SmallWindow />
        <ImeBar />
      </main>
      <Taskbar />
    </div>
  );
}
